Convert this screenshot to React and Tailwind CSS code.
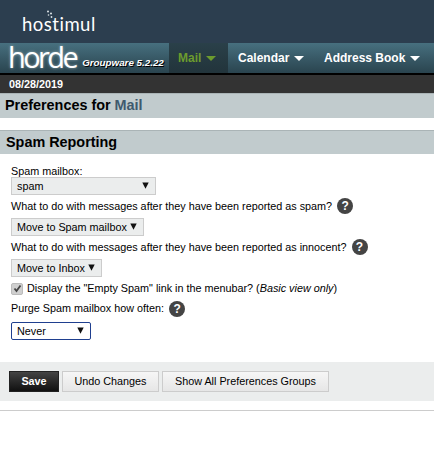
import React from 'react';

const Caret = ({ className = 'border-t-white' }) => (
  <span className={`inline-block w-0 h-0 border-x-[5px] border-x-transparent border-t-[5px] ${className}`} />
);

const Help = () => (
  <span className="ml-[5px] flex items-center justify-center w-[16px] h-[16px] rounded-full bg-[#444] text-white text-[12px] font-bold leading-none shrink-0">?</span>
);

const Select = ({ label, width, focus }) => (
  <div
    className={`flex items-center justify-between h-[18px] pl-[5px] pr-[6px] text-[10.8px] leading-none text-black ${width} ${
      focus ? 'bg-white border-[1.5px] border-[#1f3f8f] rounded-[2px]' : 'bg-[#ebeded] border border-[#ccc]'
    }`}
  >
    <span className="whitespace-nowrap">{label}</span>
    <svg width="7" height="7" viewBox="0 0 7 7" className="mb-[2px]"><path d="M0.3 0.5h6.4L3.5 6.8z" fill="#111" /></svg>
  </div>
);

const NavItem = ({ label, width, active }) => (
  <div
    className={`flex items-center gap-[5px] h-full font-bold text-[12px] pl-[9px] ${width} ${
      active ? 'bg-gradient-to-b from-[#2a4049] to-[#22343b] text-[#6c9b2e]' : 'text-white'
    }`}
  >
    {label}
    <Caret className={active ? 'border-t-[#6c9b2e]' : 'border-t-white'} />
  </div>
);

const Btn = ({ children, width, dark }) => (
  <div
    className={`flex items-center justify-center h-[21px] text-[10.8px] ${width} ${
      dark
        ? 'bg-gradient-to-b from-[#444] to-[#111] border border-[#222] text-white font-bold'
        : 'bg-gradient-to-b from-[#f6f6f6] to-[#e6e6e6] border border-[#ccc] text-black'
    }`}
  >
    {children}
  </div>
);

export default function App() {
  return (
    <div className="w-[434px] h-[456px] bg-white overflow-hidden font-['Liberation_Sans',Arial,sans-serif] text-[10.8px] text-black">
      {/* hostimul bar */}
      <div className="h-[43px] bg-[#2c3e4f] flex items-center pl-[22px]">
        <div className="relative font-['Lato',sans-serif] text-[18.5px] leading-none text-white tracking-[0.5px] mt-[6px]">
          hostimul
          <svg className="absolute left-[24px] top-[-5px]" width="10" height="9" viewBox="0 0 10 9">
            <circle cx="2" cy="1.5" r="1" fill="#dfe6ea" />
            <circle cx="5" cy="3.5" r="1" fill="#dfe6ea" />
            <circle cx="2.5" cy="5" r="0.8" fill="#dfe6ea" />
            <circle cx="5.5" cy="7" r="0.9" fill="#dfe6ea" />
          </svg>
        </div>
      </div>

      {/* nav */}
      <div className="h-[31px] flex border-b-[1px] border-black bg-gradient-to-b from-[#47707f] to-[#2a444f]">
        <div className="w-[169px] flex items-end pl-[8px] pb-[1px] text-white">
          <span className="font-['Open_Sans',sans-serif] font-medium text-[29px] leading-[30px] tracking-[-2.6px] [text-shadow:0_0_3px_rgba(255,255,255,0.5)]">horde</span>
          <span className="ml-[6px] mb-[4px] font-bold italic text-[9.8px] leading-none whitespace-nowrap [text-shadow:1px_1px_0_#000]">Groupware 5.2.22</span>
        </div>
        <NavItem label="Mail" width="w-[59px]" active />
        <NavItem label="Calendar" width="w-[86px] pl-[10px]" />
        <NavItem label="Address Book" width="w-[120px] pl-[10px]" />
      </div>

      {/* date */}
      <div className="h-[19px] border-t border-black bg-[#333] text-white font-bold text-[10.8px] flex items-center pl-[9px]">08/28/2019</div>

      <div className="h-[25px] bg-[#c1cbcd] border-t border-[#aab4b6] flex items-center pl-[5px] font-bold text-[14.4px]">
        Preferences for&nbsp;<span className="text-[#3f5a6e]">Mail</span>
      </div>

      <div className="mt-[12px] h-[24px] bg-[#c1cbcd] border-t border-[#aab4b6] flex items-center pl-[6px] font-bold text-[14.4px]">Spam Reporting</div>

      {/* form */}
      <div className="pl-[11px] flex flex-col">
        <div className="mt-[11px] h-[12px] leading-[12px]">Spam mailbox:</div>
        <Select label="spam" width="w-[145px]" />
        <div className="mt-[1px] h-[20px] flex items-center">What to do with messages after they have been reported as spam?<Help /></div>
        <div className="mt-[2px]"><Select label="Move to Spam mailbox" width="w-[133px]" /></div>
        <div className="h-[22px] flex items-center">What to do with messages after they have been reported as innocent?<Help /></div>
        <div className="mt-[1px]"><Select label="Move to Inbox" width="w-[91px]" /></div>
        <div className="mt-[2px] h-[19px] flex items-center">
          <span className="w-[12px] h-[12px] mr-[4px] rounded-[2px] bg-[#cfcfcf] border border-[#bbb] flex items-center justify-center">
            <svg width="9" height="9" viewBox="0 0 9 9"><path d="M1.5 4.5L3.5 7L7.5 1.5" fill="none" stroke="#444" strokeWidth="1.8" /></svg>
          </span>
          <span>Display the "Empty Spam" link in the menubar? (<em>Basic view only</em>)</span>
        </div>
        <div className="h-[21px] flex items-center">Purge Spam mailbox how often:<Help /></div>
        <div className="mt-[3px]"><Select label="Never" width="w-[80px]" focus /></div>
      </div>

      {/* actions */}
      <div className="mt-[22px] h-[39px] bg-[#ebeded] flex items-center pl-[9px] gap-[3px]">
        <Btn width="w-[50px]" dark>Save</Btn>
        <Btn width="w-[97px]">Undo Changes</Btn>
        <Btn width="w-[167px]">Show All Preferences Groups</Btn>
      </div>

      <div className="mt-[9px] h-px bg-[#ccc]" />
    </div>
  );
}
